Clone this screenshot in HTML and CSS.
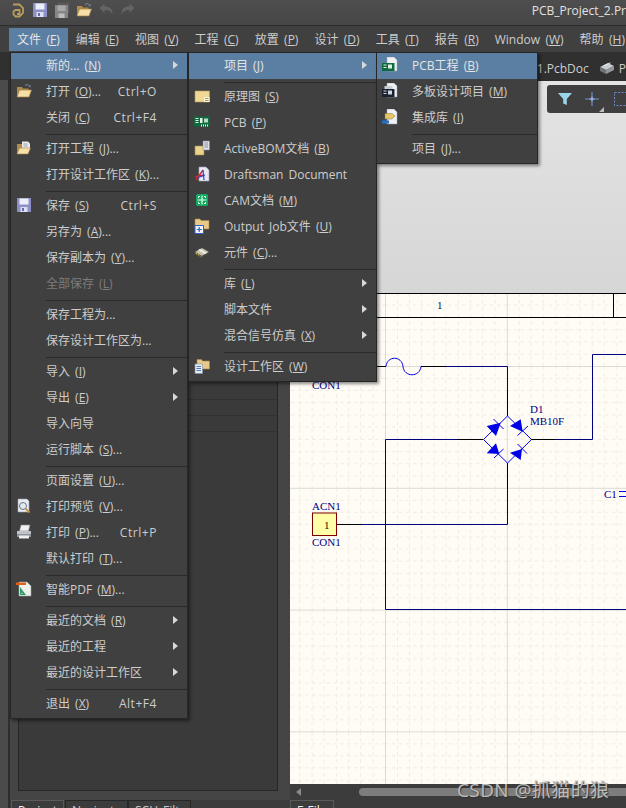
FILE: index.html
```html
<!DOCTYPE html>
<html lang="zh-CN">
<head>
<meta charset="utf-8">
<title>PCB_Project_2</title>
<link rel="stylesheet" href="styles.css">
</head>
<body>
<svg class="sprite" width="0" height="0" aria-hidden="true">
  <defs>
    <symbol id="i-open" viewBox="0 0 16 16">
      <path d="M1 4h5l1 1.500h5.500v8.500H1z" fill="#b08d4c"/>
      <path d="M1 14l2.500-7h12l-2.500 7z" fill="#f6dfa8" stroke="#a9803c" stroke-width=".7"/>
      <path d="M9 2.500c1.500-1.300 3.500-1 4.500.5" fill="none" stroke="#7f8ea0" stroke-width="1"/>
      <path d="M14.800 2l-.5 2.500-2-1z" fill="#7f8ea0"/>
    </symbol>
    <symbol id="i-save" viewBox="0 0 16 16">
      <path d="M1 1h14v14H1z" fill="#8d8fc9"/>
      <path d="M3.500 1.500h9v6h-9z" fill="#eceef8"/>
      <path d="M4.500 10h7v5h-7z" fill="#dcdff0"/>
      <path d="M6 11h2v3H6z" fill="#6a6ca8"/>
    </symbol>
  </defs>
</svg>

<div class="app">
  <header class="titlebar">
    <svg class="tool" viewBox="0 0 16 16"><path d="M3 2.500h6.500l3.500 3.500v5l-3.500 3.500H5.500L3.500 12.500V9.500l2-1.500h4v4H7" fill="none" stroke="#b89a5c" stroke-width="1.800"/></svg>
    <svg class="tool"><use href="#i-save"/></svg>
    <svg class="tool" viewBox="0 0 16 16"><path d="M4 .5h11.500V11H4z" fill="#5a5a5a"/><path d="M1 3h13v13H1z" fill="#868686"/><path d="M3.500 3.500h8V9h-8z" fill="#a8a8a8"/><path d="M4.500 11.500h6V16h-6z" fill="#bcbcbc"/></svg>
    <svg class="tool"><use href="#i-open"/></svg>
    <svg class="tool" viewBox="0 0 16 16"><path d="M1.500 6l5-4.500v3c5 0 8.500 2 8 8.500-1.200-3.200-3.500-5-8-5v3z" fill="#646464"/></svg>
    <svg class="tool" viewBox="0 0 16 16"><path d="M14.500 6l-5-4.500v3c-5 0-8.500 2-8 8.500 1.200-3.200 3.500-5 8-5v3z" fill="#646464"/></svg>
    <span class="doc-title">PCB_Project_2.Pr</span>
  </header>

  <nav class="menubar">
    <span class="top-item is-open">文件 (<u>F</u>)</span>
    <span class="top-item">编辑 (<u>E</u>)</span>
    <span class="top-item">视图 (<u>V</u>)</span>
    <span class="top-item">工程 (<u>C</u>)</span>
    <span class="top-item">放置 (<u>P</u>)</span>
    <span class="top-item">设计 (<u>D</u>)</span>
    <span class="top-item">工具 (<u>T</u>)</span>
    <span class="top-item">报告 (<u>R</u>)</span>
    <span class="top-item">Window (<u>W</u>)</span>
    <span class="top-item">帮助 (<u>H</u>)</span>
  </nav>

  <div class="tabstrip">
    <span>B1.PcbDoc</span>
    <svg class="tab-icon" viewBox="0 0 16 14"><path d="M1 6l8-4 6 3-8 4z" fill="#c9ccd0"/><path d="M1 6l6 3v4l-6-3z" fill="#6e7378"/><path d="M7 9l8-4v4l-8 4z" fill="#92979c"/><path d="M4 4.500l7-3 1 .5-7 3z" fill="#eceef0"/></svg>
    <span>P</span>
  </div>

  <div class="workspace">
    <div class="rail"></div>
    <aside class="side">
      <div class="side-body">
        <div class="panel">
          <div class="panel-row"></div>
          <div class="panel-row"></div>
          <div class="panel-row"></div>
        </div>
      </div>
      <div class="side-tabs">
        <span class="side-tab is-active">Projects</span>
        <span class="side-tab">Navigator</span>
        <span class="side-tab">SCH Filter</span>
      </div>
    </aside>

    <main class="main">
      <div class="canvas-top">
        <div class="float-tools">
          <svg class="ft-icon" viewBox="0 0 14 14"><path d="M0 1h14L8.800 7v6L5.200 11.500V7z" fill="#9ad4ea"/></svg>
          <svg class="ft-icon" viewBox="0 0 14 14"><path d="M7 0v14M0 7h14" stroke="#6f8fd0" stroke-width="1.200" fill="none"/><path d="M7 4.500v5M4.500 7h5" stroke="#a8c0ee" stroke-width="1"/></svg>
          <svg class="ft-corner" viewBox="0 0 5 5"><path d="M5 0v5H0z" fill="#bdbdbd"/></svg>
          <svg class="ft-select" viewBox="0 0 14 14"><path d="M.5.500h13v13H.5z" fill="none" stroke="#6f8fd0" stroke-dasharray="2 1.500"/></svg>
        </div>
      </div>

      <svg class="sheet" viewBox="290 293 336 491" preserveAspectRatio="none">
        <defs>
          <pattern id="grid" patternUnits="userSpaceOnUse" x="385" y="366" width="121.800" height="121.800">
            <g stroke="#efebe2" stroke-width="1" stroke-dasharray="3.500 3.500" fill="none">
              <path d="M12.500 0v122M24.500 0v122M36.500 0v122M49 0v122M61 0v122M73.500 0v122M85.500 0v122M97.500 0v122M110 0v122"/>
              <path d="M0 12.500h122M0 24.500h122M0 36.500h122M0 49h122M0 61h122M0 73.500h122M0 85.500h122M0 97.500h122M0 110h122"/>
            </g>
            <path d="M0 0h1v122H0zM0 0h122v1H0z" fill="#dcdbd3"/>
          </pattern>
        </defs>
        <rect x="290" y="293" width="336" height="491" fill="#fffcf6"/>
        <rect x="290" y="293" width="336" height="491" fill="url(#grid)"/>
        <path class="line-black" d="M290 293.500h336M290 317.500h336M613.500 293v24"/>
        <text class="sch-black" x="437" y="309">1</text>

        <path class="line-blue" d="M386 366.500c1-11 16-11 17 0c1 11 17 11 18 0"/>
        <path class="line-black" d="M377 366.500h9M421 366.500h25M507.500 390v26M457 439.500h26M531 439.500h24M507.500 463v25M337 524.500h24"/>
        <path class="line-navy" d="M446 366.500h61.500V390M531 439.500m24 0h37.500V354.500H626M457 439.500H385.500V609.500H626M507.500 488v36.500H361"/>
        <path class="line-blue" d="M507.500 416l24 23.500-24 23.500-24-23.500zM493.500 419l10 10M517.500 435.500l10.500-9.500M494 458l9.500-9M517.500 444l9.500 9.500M619 491.500h7M619 496.500h7"/>
        <path class="fill-blue" d="M486.700 426l9.300 10 4.700-13.300zM510 426l10.700-6.700 2 12.400zM486.700 453.300l9.300-10 3.300 10.700zM510 452.700l10.700 7.300 1.300-11z"/>

        <rect class="pin-box" x="312.500" y="513" width="24" height="22.500"/>
        <text class="sch-black" x="324" y="529">1</text>
        <text class="sch-label" x="312" y="389">CON1</text>
        <text class="sch-label" x="312" y="510">ACN1</text>
        <text class="sch-label" x="312" y="546">CON1</text>
        <text class="sch-label" x="530" y="413">D1</text>
        <text class="sch-label" x="530" y="425">MB10F</text>
        <text class="sch-label" x="604" y="498">C1</text>
      </svg>

      <div class="scrollbar">
        <svg class="scroll-arrow" viewBox="0 0 5 8"><path d="M5 0v8L0 4z" fill="#8a8a8a"/></svg>
        <div class="scroll-thumb"></div>
      </div>
      <div class="main-tabs"><span class="side-tab is-active">E-Files</span></div>
    </main>
  </div>

  <div class="menus">
    <div class="menu menu-file">
      <div class="row is-hot"><span class="ico"></span><span>新的... (<u>N</u>)</span><i class="arrow"></i></div>
      <div class="row"><span class="ico"><svg><use href="#i-open"/></svg></span><span>打开 (<u>O</u>)...</span><span class="key">Ctrl+O</span></div>
      <div class="row"><span class="ico"></span><span>关闭 (<u>C</u>)</span><span class="key">Ctrl+F4</span></div>
      <div class="sep"></div>
      <div class="row"><span class="ico"><svg viewBox="0 0 16 16"><path d="M1 4h5l1 1.500h2V14H1z" fill="#b08d4c"/><path d="M6 1.500h6l2 2V10H6z" fill="#e8eaee"/><path d="M7.500 4h4M7.500 6h4" stroke="#8a8f98" stroke-width=".8"/><path d="M1 14l2.500-6h11l-2.500 6z" fill="#f6dfa8" stroke="#a9803c" stroke-width=".6"/></svg></span><span>打开工程 (<u>J</u>)...</span></div>
      <div class="row"><span class="ico"></span><span>打开设计工作区 (<u>K</u>)...</span></div>
      <div class="sep"></div>
      <div class="row"><span class="ico"><svg><use href="#i-save"/></svg></span><span>保存 (<u>S</u>)</span><span class="key">Ctrl+S</span></div>
      <div class="row"><span class="ico"></span><span>另存为 (<u>A</u>)...</span></div>
      <div class="row"><span class="ico"></span><span>保存副本为 (<u>Y</u>)...</span></div>
      <div class="row is-off"><span class="ico"></span><span>全部保存 (<u>L</u>)</span></div>
      <div class="sep"></div>
      <div class="row"><span class="ico"></span><span>保存工程为...</span></div>
      <div class="row"><span class="ico"></span><span>保存设计工作区为...</span></div>
      <div class="sep"></div>
      <div class="row"><span class="ico"></span><span>导入 (<u>I</u>)</span><i class="arrow"></i></div>
      <div class="row"><span class="ico"></span><span>导出 (<u>E</u>)</span><i class="arrow"></i></div>
      <div class="row"><span class="ico"></span><span>导入向导</span></div>
      <div class="row"><span class="ico"></span><span>运行脚本 (<u>S</u>)...</span></div>
      <div class="sep"></div>
      <div class="row"><span class="ico"></span><span>页面设置 (<u>U</u>)...</span></div>
      <div class="row"><span class="ico"><svg viewBox="0 0 16 16"><path d="M2 1h9l2 2v11H2z" fill="#e8ebf2" stroke="#9aa3b0" stroke-width=".6"/><circle cx="7" cy="8" r="3.500" fill="#dfeaf6" stroke="#6d7680"/><path d="M9.500 10.500l4 4" stroke="#c9923c" stroke-width="1.800"/></svg></span><span>打印预览 (<u>V</u>)...</span></div>
      <div class="row"><span class="ico"><svg viewBox="0 0 16 16"><path d="M5 1h9l-1.500 6h-9z" fill="#f0f0f0" stroke="#888" stroke-width=".6"/><path d="M1 7h14v6H1z" fill="#bfc2c8"/><path d="M1 10h14v3H1z" fill="#8e9198"/><path d="M3 11.500h10v3H3z" fill="#eceef0"/></svg></span><span>打印 (<u>P</u>)...</span><span class="key">Ctrl+P</span></div>
      <div class="row"><span class="ico"></span><span>默认打印 (<u>T</u>)...</span></div>
      <div class="sep"></div>
      <div class="row"><span class="ico"><svg viewBox="0 0 16 16"><path d="M3 1h8l4 4v10H3z" fill="#eef0ec" stroke="#9aa3a0" stroke-width=".6"/><path d="M0 1.500h10v2.500H0z" fill="#e0601c"/><path d="M4 14V6l6 8z" fill="#2e9a64"/><path d="M5.500 11.500v1.500h1.500z" fill="#eef0ec"/></svg></span><span>智能PDF (<u>M</u>)...</span></div>
      <div class="sep"></div>
      <div class="row"><span class="ico"></span><span>最近的文档 (<u>R</u>)</span><i class="arrow"></i></div>
      <div class="row"><span class="ico"></span><span>最近的工程</span><i class="arrow"></i></div>
      <div class="row"><span class="ico"></span><span>最近的设计工作区</span><i class="arrow"></i></div>
      <div class="sep"></div>
      <div class="row"><span class="ico"></span><span>退出 (<u>X</u>)</span><span class="key">Alt+F4</span></div>
    </div>

    <div class="menu menu-new">
      <div class="row is-hot"><span class="ico"></span><span>项目 (<u>J</u>)</span><i class="arrow"></i></div>
      <div class="sep"></div>
      <div class="row"><span class="ico"><svg viewBox="0 0 16 16"><path d="M1 3h14.500v11H1z" fill="#efd893" stroke="#b39a5e" stroke-width=".6"/><path d="M10 9h5.500v5H10z" fill="#fff6d8"/><path d="M11 10.500h3.500M11 12.500h3.500" stroke="#8a7a50" stroke-width=".8"/></svg></span><span>原理图 (<u>S</u>)</span></div>
      <div class="row"><span class="ico"><svg viewBox="0 0 16 16"><path d="M0 2.500h16v10H0z" fill="#0f6b3e"/><path d="M1.500 4h3v1h-3zM1.500 6h3v1h-3zM1.500 8h3v1h-3zM6 4h2.500v5H6z" fill="#e4f2ea"/><path d="M10 4.500h4v4h-4z" fill="#b7dcc6"/><path d="M7 10.500h1v2H7zM9 10.500h1v2H9zM11 10.500h1v2h-1zM13 10.500h1v2h-1z" fill="#f2f2f2"/></svg></span><span>PCB (<u>P</u>)</span></div>
      <div class="row"><span class="ico"><svg viewBox="0 0 16 16"><path d="M1 6h9v9H1z" fill="#ecd38c" stroke="#a9884c" stroke-width=".6"/><path d="M9 1h6.500v9H9z" fill="#dfe3ea" stroke="#7f8894" stroke-width=".6"/><path d="M10.500 3h3.500M10.500 5h3.500M10.500 7h3.500" stroke="#6e7680" stroke-width=".8"/></svg></span><span>ActiveBOM文档 (<u>B</u>)</span></div>
      <div class="row"><span class="ico"><svg viewBox="0 0 16 16"><path d="M5 1h7l3 3v11H5z" fill="#e6e9f2" stroke="#9aa3b8" stroke-width=".6"/><path d="M1 11l9-2M2 14l7-10" stroke="#d8252c" stroke-width="1.400"/><path d="M9 4l1 10M3 12l8-3" stroke="#2a44c8" stroke-width="1.200"/></svg></span><span>Draftsman Document</span></div>
      <div class="row"><span class="ico"><svg viewBox="0 0 16 16"><rect x="2" y="2" width="12" height="12" rx="1.500" fill="#12a860"/><path d="M8 3.500v9M3.500 8h9" stroke="#eafff4" stroke-width="1.200"/><path d="M4.500 6V4.500H6M10 4.500h1.500V6M11.500 10v1.500H10M6 11.500H4.500V10" fill="none" stroke="#eafff4"/></svg></span><span>CAM文档 (<u>M</u>)</span></div>
      <div class="row"><span class="ico"><svg viewBox="0 0 16 16"><path d="M1 1h5l1 1.500h8V11H1z" fill="#e9c987" stroke="#a9884c" stroke-width=".6"/><path d="M1 7.500h8.500V15.500H1z" fill="#f4f6fb" stroke="#2b62c8"/><path d="M5.200 9v5M2.800 11.500h5" stroke="#2b62c8" stroke-width="1.200"/></svg></span><span>Output Job文件 (<u>U</u>)</span></div>
      <div class="row"><span class="ico"><svg viewBox="0 0 16 16"><path d="M1 8l7-4 7 4-7 4z" fill="#c4c1ae"/><path d="M1 8l7 4v2l-7-4z" fill="#6f6a40"/><path d="M8 12l7-4v2l-7 4z" fill="#48463a"/><path d="M4 6l2-1 7 4-2 1z" fill="#f3f1e4"/><path d="M2 10l1-1M4 11l1-1" stroke="#c8a83c"/></svg></span><span>元件 (<u>C</u>)...</span></div>
      <div class="sep"></div>
      <div class="row"><span class="ico"></span><span>库 (<u>L</u>)</span><i class="arrow"></i></div>
      <div class="row"><span class="ico"></span><span>脚本文件</span><i class="arrow"></i></div>
      <div class="row"><span class="ico"></span><span>混合信号仿真 (<u>X</u>)</span><i class="arrow"></i></div>
      <div class="sep"></div>
      <div class="row"><span class="ico"><svg viewBox="0 0 16 16"><path d="M3 1.500h4.500l1 1.500h7v8H3z" fill="#e9c987" stroke="#a9884c" stroke-width=".6"/><path d="M1 6h7.500v9.500H1z" fill="#e8ecf4" stroke="#7f8fa8" stroke-width=".6"/><path d="M2.500 8.500h4.500M2.500 10.500h4.500M2.500 12.500h4.500" stroke="#3c6fb0" stroke-width=".9"/></svg></span><span>设计工作区 (<u>W</u>)</span></div>
    </div>

    <div class="menu menu-project">
      <div class="row is-hot"><span class="ico"><svg viewBox="0 0 16 16"><path d="M5 0h7l3 3v11H5z" fill="#eef0f4" stroke="#9aa3b0" stroke-width=".5"/><path d="M0 6h12.500v8H0z" fill="#0f6b3e"/><path d="M1.500 7.500h3v1h-3zM1.500 10h3v1h-3zM6 7.500h4v4H6z" fill="#dff0e6"/></svg></span><span>PCB工程 (<u>B</u>)</span></div>
      <div class="row"><span class="ico"><svg viewBox="0 0 16 16"><path d="M5 0h7l3 3v11H5z" fill="#eef0f4" stroke="#9aa3b0" stroke-width=".5"/><path d="M2.500 3h8v4h-8z" fill="#c8ccd4"/><path d="M0 6h12.500v8H0z" fill="#1a2230"/><path d="M1.500 7.500h3v1h-3zM1.500 10h3v1h-3zM6 7.500h4v4H6z" fill="#cfd6e4"/></svg></span><span>多板设计项目 (<u>M</u>)</span></div>
      <div class="row"><span class="ico"><svg viewBox="0 0 16 16"><path d="M5 0h7l3 3v12H5z" fill="#eef0f4" stroke="#9aa3b0" stroke-width=".5"/><path d="M3 4.500h7l3 2.500-3 3H3z" fill="#e6c668" stroke="#8a7430" stroke-width=".5"/><path d="M0 11.500h7v3H0z" fill="#2a6fc4"/><path d="M1 10.500v1M3 10.500v1M5 10.500v1" stroke="#2a6fc4"/></svg></span><span>集成库 (<u>I</u>)</span></div>
      <div class="sep"></div>
      <div class="row"><span class="ico"></span><span>项目 (<u>J</u>)...</span></div>
    </div>
  </div>

  <div class="watermark">CSDN @抓猫的狼</div>
</div>
</body>
</html>
```

FILE: styles.css
```css
* { box-sizing: border-box; }
html, body { margin: 0; padding: 0; }
body {
  width: 626px;
  height: 808px;
  overflow: hidden;
  background: #3c3c3c;
  color: #cdcdcd;
  font-family: "Open Sans", "Noto Sans CJK SC", sans-serif;
  font-size: 12px;
  word-spacing: 2px;
}
.sprite { position: absolute; }
u { text-underline-offset: 1px; }

.app {
  position: relative;
  width: 626px;
  height: 808px;
  overflow: hidden;
  display: flex;
  flex-direction: column;
}

/* title bar */
.titlebar {
  flex: none;
  height: 26px;
  display: flex;
  align-items: center;
  gap: 6px;
  padding: 0 0 5px 10px;
  background: linear-gradient(#4e4e4e, #464646);
  border-bottom: 1px solid #2b2b2b;
  overflow: hidden;
}
.tool { width: 16px; height: 16px; flex: none; }
.doc-title {
  margin-left: auto;
  color: #e2e2e2;
  font-size: 12px;
  white-space: nowrap;
}

/* menu bar */
.menubar {
  flex: none;
  height: 26px;
  display: flex;
  align-items: flex-end;
  padding: 0 0 1px 9px;
  background: #404040;
  white-space: nowrap;
  word-spacing: 2.300px;
}
.top-item {
  height: 23px;
  line-height: 23px;
  padding: 0 8px;
}
.top-item.is-open { background: #5b7fa3; color: #e6e6e6; }

/* document tabs */
.tabstrip {
  flex: none;
  height: 28px;
  display: flex;
  align-items: center;
  justify-content: flex-end;
  gap: 10px;
  padding-top: 4px;
  background: #303030;
}
.tab-icon { width: 16px; height: 14px; margin-right: -6px; }

/* workspace */
.workspace { flex: 1; min-height: 0; display: flex; }
.rail {
  flex: none;
  width: 10px;
  background: #4b4b4b;
  border-right: 2px solid #2e2e2e;
}
.side {
  flex: none;
  width: 280px;
  display: flex;
  flex-direction: column;
  background: #454545;
}
.side-body { flex: 1; min-height: 0; padding: 32px 12px 9px 8px; }
.panel {
  height: 100%;
  padding-top: 271px;
  background: #3a3a3a;
  border: 1px solid #262626;
}
.panel-row { height: 16px; border-bottom: 1px solid #323232; }
.side-tabs {
  flex: none;
  height: 8px;
  display: flex;
  overflow: hidden;
  background: #3c3c3c;
  padding-left: 1px;
}
.side-tab {
  display: block;
  flex: none;
  width: 63px;
  height: 24px;
  padding: 2px 0 0 6px;
  font-size: 12px;
  line-height: 16px;
  border: 1px solid #262626;
  color: #cdcdcd;
  background: #3c3c3c;
  white-space: nowrap;
}
.side-tab.is-active {
  width: 53px;
  margin-right: 1px;
  color: #f2f2f2;
  border-color: #5a5a5a;
}

.main { flex: 1; min-width: 0; display: flex; flex-direction: column; }
.canvas-top {
  flex: none;
  height: 213px;
  display: flex;
  justify-content: flex-end;
  align-items: flex-start;
  padding-top: 4px;
  background: linear-gradient(#e4e4e4, #d6d6d6);
  border-top: 1px solid #2e2e2e;
  overflow: hidden;
}
.float-tools {
  width: 79px;
  height: 28px;
  flex: none;
  display: flex;
  align-items: center;
  padding-left: 11px;
  background: #3f3f3f;
  border-radius: 3px 0 0 3px;
  overflow: hidden;
}
.ft-icon { width: 14px; height: 14px; flex: none; }
.ft-icon + .ft-icon { margin-left: 13px; }
.ft-corner { width: 5px; height: 5px; flex: none; align-self: flex-end; margin: 0 0 1px 0; }
.ft-select { width: 14px; height: 14px; flex: none; margin-left: 10px; }

.sheet { flex: 1; min-height: 0; width: 336px; display: block; }
.line-black { fill: none; stroke: #000; stroke-width: 1; }
.line-navy { fill: none; stroke: #000080; stroke-width: 1; }
.line-blue { fill: none; stroke: #0000e6; stroke-width: 1; }
.fill-blue { fill: #0000e6; }
.pin-box { fill: #ffffa8; stroke: #800000; stroke-width: 1; }
.sch-label { fill: #000080; font: 11px "Liberation Serif", serif; word-spacing: 0; }
.sch-black { fill: #111; font: 11px "Liberation Serif", serif; word-spacing: 0; }

.scrollbar {
  flex: none;
  height: 16px;
  display: flex;
  align-items: center;
  padding-left: 6px;
  background: #3c3c3c;
}
.scroll-arrow { width: 5px; height: 8px; flex: none; }
.scroll-thumb {
  margin-left: 58px;
  flex: 1;
  height: 8px;
  background: #7d7d7d;
  border-radius: 4px 0 0 4px;
}
.main-tabs { flex: none; height: 8px; overflow: hidden; background: #3c3c3c; }
.main-tabs .side-tab { width: 44px; }

/* open menus */
.menus {
  position: absolute;
  left: 10px;
  top: 52px;
  display: flex;
  align-items: flex-start;
  white-space: nowrap;
}
.menu {
  flex: none;
  position: relative;
  padding-bottom: 1px;
  background: #404040;
  border: 1px solid #262626;
  box-shadow: 2px 2px 3px rgba(0, 0, 0, .45);
}
.menu-file { width: 178px; }
.menu-new { width: 189px; }
.menu-project { width: 162px; margin-left: -1px; }

.row {
  height: 26px;
  display: flex;
  align-items: center;
  padding: 0 9px 2px 5px;
}
.row.is-hot { background: #5b7fa3; color: #e4e4e4; }
.row.is-off { color: #7c7c7c; }
.ico {
  flex: none;
  width: 16px;
  height: 16px;
  margin-right: 14px;
  display: block;
}
.ico svg { width: 16px; height: 16px; display: block; }
.key { margin-left: auto; margin-right: 21px; letter-spacing: .55px; }
.arrow {
  margin-left: auto;
  width: 0;
  height: 0;
  border-left: 5px solid #d8d8d8;
  border-top: 4px solid transparent;
  border-bottom: 4px solid transparent;
}
.sep { height: 1px; margin: 3px 0 1px 35px; background: #2a2a2a; }

.watermark {
  position: absolute;
  left: 457px;
  top: 777px;
  color: #bcbcbc;
  font-size: 19px;
  line-height: 26px;
  letter-spacing: .4px;
  word-spacing: 0;
  white-space: nowrap;
  text-shadow: 1px 1px 1px #333;
  pointer-events: none;
}
```
